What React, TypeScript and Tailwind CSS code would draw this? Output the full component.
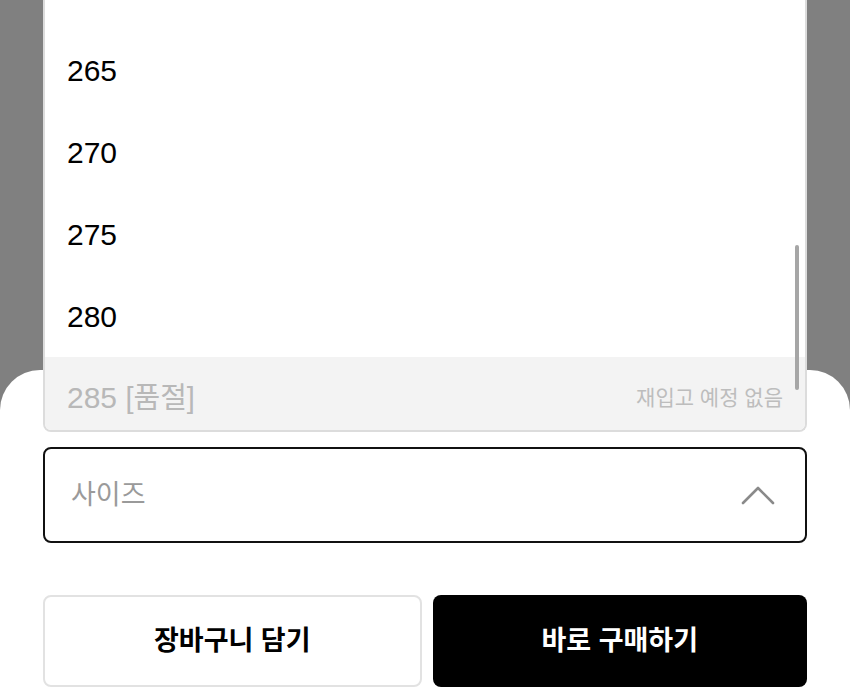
import React from 'react';

const sizes = ['265', '270', '275', '280'];

function ChevronUp() {
  return (
    <svg width="34" height="20" viewBox="0 0 34 20" fill="none">
      <path d="M2 18 L17 3 L32 18" stroke="#8a8a8a" strokeWidth="2.6" strokeLinecap="round" strokeLinejoin="round" />
    </svg>
  );
}

export default function App() {
  return (
    <div
      className="h-[699px] w-full bg-[#808080] flex flex-col overflow-hidden"
      style={{ fontFamily: '"Liberation Sans", "Noto Sans CJK KR", sans-serif' }}
    >
      <div className="h-[370px] shrink-0" />
      <div className="flex-1 bg-white rounded-t-[40px] px-[43px] pt-[77px]">
        <div className="relative">
          {/* dropdown list, opened upward */}
          <div className="absolute left-0 right-0 bottom-full mb-[15px] h-[480px] bg-white border-2 border-t-0 border-[#dcdcdc] rounded-b-[8px] overflow-hidden flex flex-col justify-end">
            <div className="flex flex-col mb-[-9px]">
              {sizes.map((s) => (
                <div key={s} className="h-[82px] shrink-0 flex items-center pl-[22px] text-[30px] text-black">
                  {s}
                </div>
              ))}
              <div className="h-[82px] shrink-0 flex items-center justify-between pl-[22px] pr-[22px] bg-[#f3f3f3]">
                <span className="text-[30px] text-[#b8b8b8]">
                  285 <span className="text-[29px]">[품절]</span>
                </span>
                <span className="text-[21px] text-[#bdbdbd]">재입고 예정 없음</span>
              </div>
            </div>
            <div className="absolute right-[6px] bottom-[40px] h-[145px] w-[4px] rounded-full bg-[#a6a6a6]" />
          </div>

          <div className="h-[96px] border-2 border-[#111] rounded-[8px] flex items-center justify-between pl-[26px] pr-[30px]">
            <span className="text-[27px] text-[#9a9a9a]">사이즈</span>
            <ChevronUp />
          </div>
        </div>

        <div className="mt-[52px] flex gap-[11px]">
          <button className="flex-1 h-[92px] border-2 border-[#e2e2e2] rounded-[8px] bg-white text-[27px] font-bold text-black">
            장바구니 담기
          </button>
          <button className="flex-1 h-[92px] rounded-[8px] bg-black text-[27px] font-bold text-white">
            바로 구매하기
          </button>
        </div>
      </div>
    </div>
  );
}
